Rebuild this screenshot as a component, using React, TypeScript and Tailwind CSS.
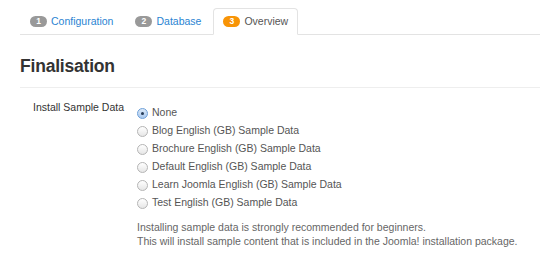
const tabs = [
  { n: '1', label: 'Configuration', active: false },
  { n: '2', label: 'Database', active: false },
  { n: '3', label: 'Overview', active: true },
]

const options = [
  'None',
  'Blog English (GB) Sample Data',
  'Brochure English (GB) Sample Data',
  'Default English (GB) Sample Data',
  'Learn Joomla English (GB) Sample Data',
  'Test English (GB) Sample Data',
]

function Radio({ checked }: { checked: boolean }) {
  return (
    <span
      className={`flex shrink-0 items-center justify-center w-[11px] h-[11px] rounded-full border ${
        checked
          ? 'border-[#6d9fd8] bg-gradient-to-b from-[#dbe9f8] to-[#a9c8ee]'
          : 'border-[#b5b5b5] bg-gradient-to-b from-[#ffffff] to-[#e6e6e6]'
      }`}
    >
      {checked && <span className="w-[3px] h-[3px] rounded-full bg-[#243a57]" />}
    </span>
  )
}

export default function App() {
  return (
    <div className="w-[540px] h-[260px] bg-white pl-5 pt-[8px] font-['Liberation_Sans',Arial,sans-serif] overflow-hidden">
      <ul className="flex border-b border-[#e3e3e3] h-[27px]">
        {tabs.map((t) => (
          <li key={t.n} className="mr-[2px] -mb-px">
            <span
              className={`flex items-center gap-[4px] h-[27px] px-[9px] text-[10.5px] rounded-t-[4px] border ${
                t.active ? 'border-[#e3e3e3] border-b-white bg-white text-[#555]' : 'border-transparent text-[#2a84d2]'
              }`}
            >
              <span
                className={`flex items-center justify-center w-[17px] h-[11px] rounded-full text-[8.5px] font-bold text-white ${
                  t.active ? 'bg-[#f89406]' : 'bg-[#999]'
                }`}
              >
                {t.n}
              </span>
              {t.label}
            </span>
          </li>
        ))}
      </ul>

      <h1 className="mt-[21px] text-[17.5px] leading-[20px] font-bold text-[#333] tracking-[-0.2px]">Finalisation</h1>
      <div className="mt-[11px] border-t border-[#eee]" />

      <div className="flex mt-[13px] text-[10.5px] text-[#555]">
        <div className="w-[117px] shrink-0 pl-[13px] pt-[-1px] text-[#333] leading-[12px] whitespace-nowrap">Install Sample Data</div>
        <div className="flex flex-col pt-[3px]">
          {options.map((o, i) => (
            <label key={o} className="flex items-center gap-[4px] h-[18px] whitespace-nowrap">
              <Radio checked={i === 0} />
              {o}
            </label>
          ))}
          <p className="mt-[8px] leading-[14px] text-[#666] whitespace-nowrap">
            Installing sample data is strongly recommended for beginners.
            <br />
            This will install sample content that is included in the Joomla! installation package.
          </p>
        </div>
      </div>
    </div>
  )
}
